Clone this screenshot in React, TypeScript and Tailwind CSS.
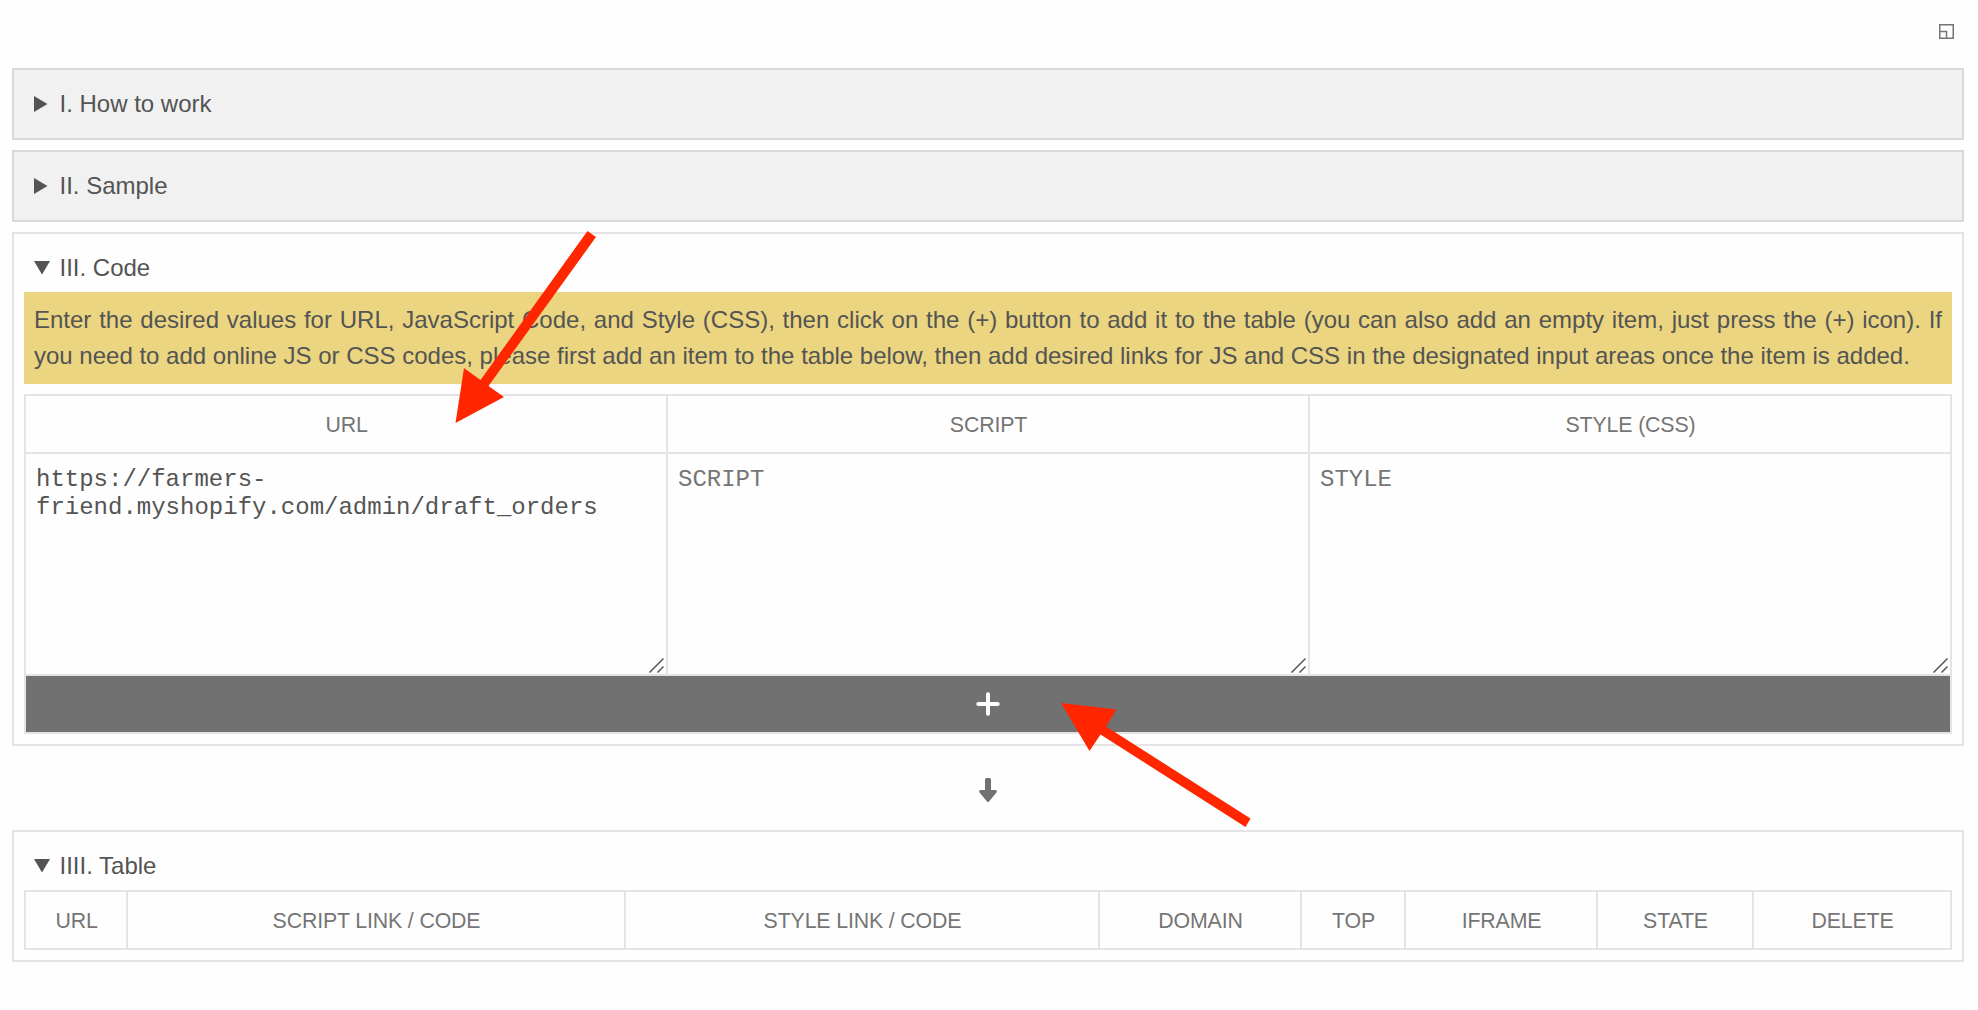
import React from "react";

function Marker({ open }: { open: boolean }) {
  return (
    <svg className="h-4 w-4 shrink-0" viewBox="0 0 16 16" fill="#545454">
      {open ? <path d="M0 1H16L8 14.500Z" /> : <path d="M0 0L13.500 8L0 16Z" />}
    </svg>
  );
}

function Summary({ title, open }: { title: string; open: boolean }) {
  return (
    <div className="flex h-[56px] items-center gap-[9.5px] pl-5 text-[24px] leading-[32px]">
      <Marker open={open} />
      <span>{title}</span>
    </div>
  );
}

function Closed({ title }: { title: string }) {
  return (
    <div className="flex h-[72px] flex-col justify-center border-2 border-[#d9d9d9] bg-[#f1f1f1]">
      <Summary title={title} open={false} />
    </div>
  );
}

function Grip() {
  return (
    <svg className="absolute right-0.5 bottom-px h-4 w-4" viewBox="0 0 16 16" fill="none" stroke="#555" strokeWidth="1.5">
      <path d="M1.500 15.500L15.500 1.500M9.500 15.500L15.500 9.500" />
    </svg>
  );
}

const areas = [
  { head: "URL", text: "https://farmers-\nfriend.myshopify.com/admin/draft_orders", cls: "text-[#545454]" },
  { head: "SCRIPT", text: "SCRIPT", cls: "text-[#757575]" },
  { head: "STYLE (CSS)", text: "STYLE", cls: "text-[#757575]" },
];

const heads = ["URL", "SCRIPT LINK / CODE", "STYLE LINK / CODE", "DOMAIN", "TOP", "IFRAME", "STATE", "DELETE"];

export default function App() {
  return (
    <div className="relative h-[1010px] w-[1978px] overflow-hidden bg-[#fefefe] pr-[14px] pl-3 font-['Liberation_Sans',Arial,sans-serif] text-[#545454]">
      <div className="flex h-[68px] items-start justify-end pt-6 pr-[10px]">
        <svg className="h-[15px] w-[15px]" viewBox="0 0 15 15" fill="none" stroke="#757575" strokeWidth="1.5">
          <path d="M.75 .75H14.25V14.25H.75ZM.75 7.5H7.5V14.25" />
        </svg>
      </div>
      <div className="flex flex-col gap-[10px]">
        <Closed title="I. How to work" />
        <Closed title="II. Sample" />
        <div className="flex h-[514px] flex-col border-2 border-[#e4e4e4] px-[10px] pt-[2px]">
          <div className="-ml-[10px] h-[56px] pt-1">
            <Summary title="III. Code" open />
          </div>
          <div className="h-[92px] bg-[#ebd580] px-[10px] py-[10px] text-justify text-[24px] leading-[36px]">
            Enter the desired values for URL, JavaScript Code, and Style (CSS), then click on the (+) button to add it to the table (you can also add an empty item, just press the (+) icon). If you need to add online JS or CSS codes, please first add an item to the table below, then add desired links for JS and CSS in the designated input areas once the item is added.
          </div>
          <div className="mt-[10px] h-[340px] border-2 border-[#e4e4e4]">
            <div className="grid grid-cols-3 gap-x-[2px] bg-[#e4e4e4]">
              {areas.map((a) => (
                <div key={a.head} className="bg-[#fefefe]">
                  <div className="flex h-[58px] items-center justify-center border-b-2 border-[#e4e4e4] pt-[2px] pl-px text-[21.33px] leading-[24px] tracking-[-0.15px] text-[#757575]">
                    {a.head}
                  </div>
                  <div className={"relative h-[220px] px-[10px] pt-[12px] font-['Liberation_Mono',monospace] text-[24px] leading-[28px] whitespace-pre " + a.cls}>
                    {a.text}
                    <Grip />
                  </div>
                </div>
              ))}
            </div>
            <div className="flex h-[58px] items-center justify-center border-t-2 border-[#e4e4e4] bg-[#717171]">
              <svg className="h-6 w-6" viewBox="0 0 24 24" stroke="#fff" strokeWidth="4" strokeLinecap="round">
                <path d="M12 2.300V21.700M2.300 12H21.700" />
              </svg>
            </div>
          </div>
        </div>
      </div>
      <div className="flex h-[84px] items-center justify-center pt-1">
        <svg className="h-6 w-[18px]" viewBox="0 0 18 24" fill="#717171">
          <path d="M6 1.5Q6 0 7.500 0H10.500Q12 0 12 1.500V12H16.500Q18.500 12.500 17.500 14.500L10 23.500Q9 24.500 8 23.500L.5 14.500Q-.5 12.500 1.500 12H6Z" />
        </svg>
      </div>
      <div className="h-[132px] border-2 border-[#e4e4e4] px-[10px]">
        <div className="-ml-[10px] h-[58px] pt-[6px]">
          <Summary title="IIII. Table" open />
        </div>
        <div className="grid h-[60px] grid-cols-[100px_496px_472px_200px_102px_190px_154px_1fr] gap-x-[2px] border-2 border-[#e4e4e4] bg-[#e4e4e4]">
          {heads.map((h) => (
            <div key={h} className="flex items-center justify-center bg-[#fefefe] pt-[2px] pl-px text-[21.33px] leading-[24px] tracking-[-0.15px] text-[#757575]">
              {h}
            </div>
          ))}
        </div>
      </div>
      <svg className="pointer-events-none absolute inset-0 h-[1010px] w-[1978px]" viewBox="0 0 1978 1010" fill="#ff2600">
        <path d="M587.500 231L596 237L488.500 386L504 397L455.500 423L464 368L480.500 380Z" />
        <path d="M1061 703L1116.500 709.500L1106 726.500L1250.500 818.500L1245.500 827L1100.500 734.500L1089.500 751Z" />
      </svg>
    </div>
  );
}
